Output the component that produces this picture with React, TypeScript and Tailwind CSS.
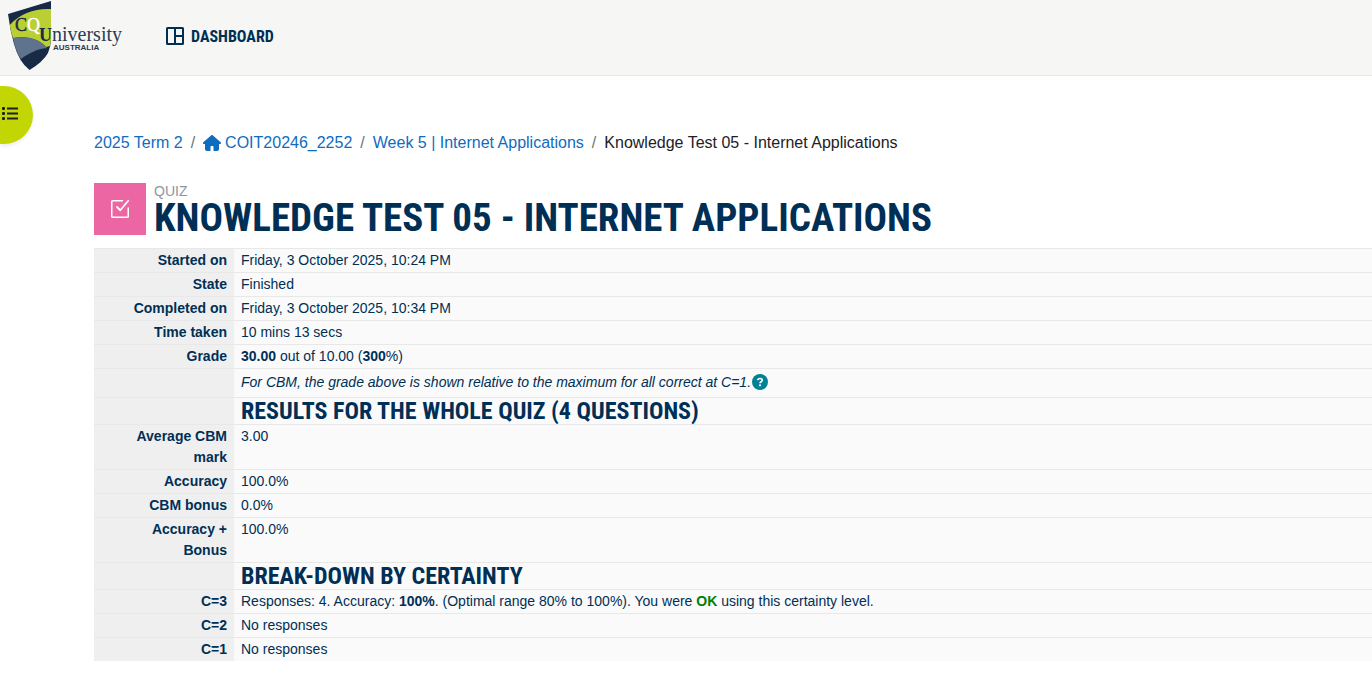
import type { ReactNode } from "react";

const condensed = "font-['Roboto_Condensed','Liberation_Sans_Narrow',sans-serif] font-bold uppercase";

function Logo() {
  return (
    <svg width="124" height="72" viewBox="0 0 124 72" role="img" aria-label="CQUniversity Australia">
      <path fill="#182a46" d="M8 14 L51 1 V38 Q51 46 48 53 Q43 62 29.500 70 Q19 62 14 44 Q10 30 8 14Z" />
      <path fill="#b9cf34" d="M9.800 25 C20 13 36 8 51 9 V38 L50 46 L46 47 C38 38 25 36 13 38 Q11 32 9.800 25Z" />
      <path fill="#5f738c" d="M13 38 C26 36 39 38 47 48 C37 49 29 53 21 59 Q15 50 13 38Z" />
      <g fontFamily="'Liberation Serif', serif" fill="#182a46">
        <text x="15" y="31" fontSize="18" stroke="#182a46" strokeWidth="0.400">C</text>
        <text x="27" y="31" fontSize="18" fill="#ffffff" stroke="#ffffff" strokeWidth="0.400">Q</text>
        <text x="39" y="41" fontSize="18" fontWeight="700">U</text>
        <text x="52" y="41" fontSize="20" fill="#2b3a55">niversity</text>
      </g>
      <text x="53" y="50" fontSize="8" fontWeight="700" fontFamily="'Liberation Sans', sans-serif" fill="#2b3a55">AUSTRALIA</text>
    </svg>
  );
}

const rows: { label: string; value: ReactNode }[] = [
  { label: "Started on", value: "Friday, 3 October 2025, 10:24 PM" },
  { label: "State", value: "Finished" },
  { label: "Completed on", value: "Friday, 3 October 2025, 10:34 PM" },
  { label: "Time taken", value: "10 mins 13 secs" },
  { label: "Grade", value: <><b>30.00</b> out of 10.00 (<b>300</b>%)</> },
  {
    label: "",
    value: (
      <div className="flex items-end pt-0.5 pb-[3px]">
        <i>For CBM, the grade above is shown relative to the maximum for all correct at C=1.</i>
        <button type="button" aria-label="Help with CBM grades" className="flex pb-0.5">
          <svg width="18" height="18" viewBox="0 0 18 18" fill="none">
            <circle cx="9" cy="9" r="8" fill="#008196" />
            <path d="M6.700 7.300C6.900 4.900 11.300 4.900 11.300 7.300C11.300 8.700 9 8.800 9 10.300" stroke="#fff" strokeWidth="1.700" />
            <circle cx="9" cy="12.300" r="1.100" fill="#fff" />
          </svg>
        </button>
      </div>
    ),
  },
  { label: "", value: <h3 className={`${condensed} text-2xl leading-6`}>Results for the whole quiz (4 questions)</h3> },
  { label: "Average CBM mark", value: "3.00" },
  { label: "Accuracy", value: "100.0%" },
  { label: "CBM bonus", value: "0.0%" },
  { label: "Accuracy + Bonus", value: "100.0%" },
  { label: "", value: <h3 className={`${condensed} text-2xl leading-6`}>Break-down by certainty</h3> },
  {
    label: "C=3",
    value: (
      <>
        Responses: 4. Accuracy: <b>100%</b>. (Optimal range 80% to 100%). You were{" "}
        <b className="text-[#008000]">OK</b> using this certainty level.
      </>
    ),
  },
  { label: "C=2", value: "No responses" },
  { label: "C=1", value: "No responses" },
];

function Slash() {
  return <span aria-hidden="true" className="px-2 text-[#6a737b]">/</span>;
}

export default function App() {
  return (
    <div className="bg-white font-['Liberation_Sans',Arial,sans-serif] text-[#002f56]">
      <header className="flex h-[76px] items-start border-b border-[#e7e7e6] bg-[#f6f6f4]">
        <a href="#home" aria-label="Home"><Logo /></a>
        <nav className="ml-10 flex h-[72px] items-center">
          <a href="#dashboard" className="flex items-center gap-[5px]">
            <svg width="22" height="22" viewBox="0 0 22 22" fill="none" stroke="#002f56" strokeWidth="2">
              <rect x="3" y="3" width="16" height="16" rx="0.500" />
              <path d="M11 3V19M11 11H19" />
            </svg>
            <span className={`${condensed} pt-0.5 text-base`}>Dashboard</span>
          </a>
        </nav>
      </header>

      <button
        type="button"
        aria-label="Open course index"
        className="mt-[10px] flex h-[58px] w-[33px] items-center rounded-r-full bg-[#c1d602] pb-0.5 shadow-[0_2px_4px_rgba(0,0,0,0.08)]"
      >
        <svg width="18" height="16" viewBox="0 0 18 16" fill="#1d2125" className="ml-px" aria-hidden="true">
          <rect x="1" y="1" width="3" height="3" rx="1" />
          <rect x="1" y="6" width="3" height="3" rx="1" />
          <rect x="1" y="11" width="3" height="3" rx="1" />
          <path d="M6 1.500h11v2H6zM6 6.500h11v2H6zM6 11.500h11v2H6z" />
        </svg>
      </button>

      <main className="-mt-[13px] pl-[94px]">
        <nav aria-label="Breadcrumb" className="flex items-center text-base leading-6 text-[#0f6cbf]">
          <a href="#term">2025 Term 2</a>
          <Slash />
          <a href="#course" className="flex items-center gap-1">
            <svg width="18" height="16" viewBox="0 0 576 512" fill="currentColor" aria-hidden="true">
              <path d="M575.800 255.500c0 18-15 32.100-32 32.100h-32l.7 160.200c.2 35.500-28.500 64.300-64 64.300H360c-22 0-24-18-24-32V376c0-13-10-24-24-24h-48c-14 0-24 11-24 24v104c0 14-2 32-24 32h-88.500c-35.300 0-64-28.700-64-64V287.600H32c-18 0-32-14-32-32.100 0-9 3-17 10-24L266.400 8c7-7 15-8 22-8s15 2 21 7l255.400 224.500c8 7 12 15 11 24z" />
            </svg>
            COIT20246_2252
          </a>
          <Slash />
          <a href="#week-5">Week 5 | Internet Applications</a>
          <Slash />
          <span aria-current="page" className="text-[#1d2125]">Knowledge Test 05 - Internet Applications</span>
        </nav>

        <div className="mt-7 flex gap-2">
          <div className="flex size-[52px] shrink-0 items-center justify-center bg-[#eb66a2]">
            <svg width="24" height="24" viewBox="0 0 24 24" fill="none" stroke="white" strokeWidth="1.500" strokeLinecap="round" strokeLinejoin="round" aria-hidden="true">
              <path d="M14.500 3.750H4.500a.75.75 0 0 0-.75.75v15c0 .4.350.75.750.75h15a.75.75 0 0 0 .75-.75V11" />
              <path d="M9 10l3.250 3.250L20.250 3.750" strokeWidth="1.800" />
            </svg>
          </div>
          <div>
            <div className="text-sm leading-4 text-[#8f959e]">QUIZ</div>
            <h1 className={`${condensed} text-[39px] leading-[38px]`}>Knowledge Test 05 - Internet Applications</h1>
          </div>
        </div>

        <table className="mt-[11px] mb-4 w-full border-separate border-spacing-0 text-sm leading-[21px]">
          <tbody>
            {rows.map((row, index) => (
              <tr key={index}>
                <th scope="row" className="w-[140px] border-t border-[#e8e8e8] bg-[#efefef] py-px pr-[7px] pl-7 text-right align-top font-bold">
                  {row.label}
                </th>
                <td className="border-t border-[#e8e8e8] bg-[#fafafa] px-[7px] py-px align-top">{row.value}</td>
              </tr>
            ))}
          </tbody>
        </table>
      </main>
    </div>
  );
}
